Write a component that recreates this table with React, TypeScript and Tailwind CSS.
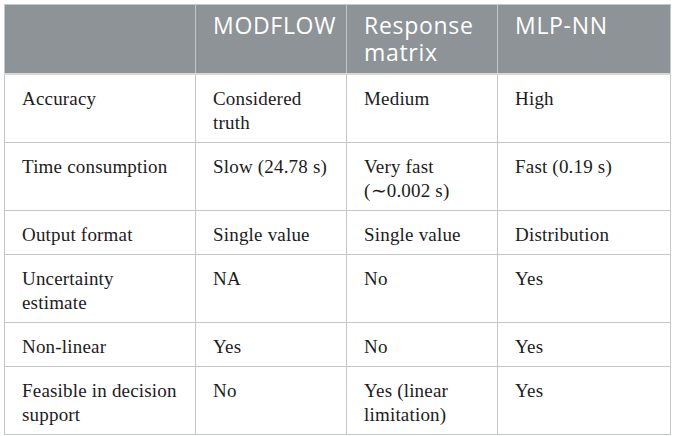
const columns = ["", "MODFLOW", "Response matrix", "MLP-NN"];

const rows: string[][] = [
  ["Accuracy", "Considered truth", "Medium", "High"],
  ["Time consumption", "Slow (24.78 s)", "Very fast (∼0.002 s)", "Fast (0.19 s)"],
  ["Output format", "Single value", "Single value", "Distribution"],
  ["Uncertainty estimate", "NA", "No", "Yes"],
  ["Non-linear", "Yes", "No", "Yes"],
  ["Feasible in decision support", "No", "Yes (linear limitation)", "Yes"],
];

const rowHeights = ["h-[69px]", "h-[68px]", "h-[43px]", "h-[67px]", "h-[43px]", "h-[68px]"];

export default function App() {
  return (
    <div className="min-h-screen bg-white pl-[4px] pt-[4px]">
      <table className="w-[666px] table-fixed border-collapse border border-[#c3c7c5]">
        <colgroup>
          <col className="w-[191px]" />
          <col className="w-[151px]" />
          <col className="w-[151px]" />
          <col className="w-[173px]" />
        </colgroup>
        <thead>
          <tr className="h-[69px] bg-[#8d9396]">
            {columns.map((c, i) => (
              <th
                key={i}
                className="border border-b-2 border-[#c3c7c5] border-b-[#d6d9d7] px-[17px] pb-[5px] pt-[7px] text-left align-top font-['Open_Sans',sans-serif] text-[23px] font-normal leading-[27px] tracking-[0.03em] text-white"
              >
                {c}
              </th>
            ))}
          </tr>
        </thead>
        <tbody>
          {rows.map((r, ri) => (
            <tr key={ri} className={rowHeights[ri]}>
              {r.map((cell, ci) => (
                <td
                  key={ci}
                  className="border border-[#c3c7c5] px-[17px] pb-[7px] pt-[12px] align-top font-['Liberation_Serif',serif] text-[19px] leading-[24px] tracking-[0.01em] text-[#1c1c1c]"
                >
                  {cell}
                </td>
              ))}
            </tr>
          ))}
        </tbody>
      </table>
    </div>
  );
}
